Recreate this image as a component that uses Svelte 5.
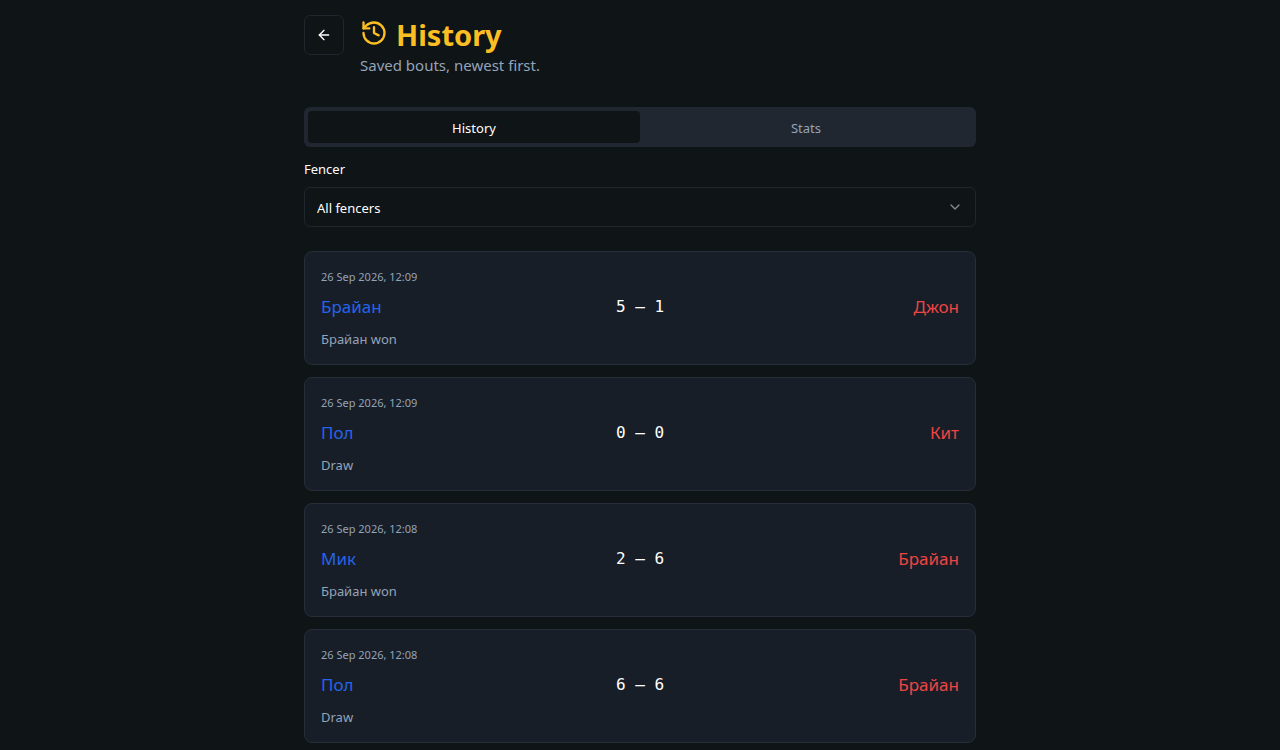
<script lang="ts">
	interface Bout {
		date: string;
		left: string;
		right: string;
		score: [number, number];
	}

	const bouts: Bout[] = [
		{ date: '26 Sep 2026, 12:09', left: 'Брайан', right: 'Джон', score: [5, 1] },
		{ date: '26 Sep 2026, 12:09', left: 'Пол', right: 'Кит', score: [0, 0] },
		{ date: '26 Sep 2026, 12:08', left: 'Мик', right: 'Брайан', score: [2, 6] },
		{ date: '26 Sep 2026, 12:08', left: 'Пол', right: 'Брайан', score: [6, 6] }
	];

	const fencers = [...new Set(bouts.flatMap((b) => [b.left, b.right]))];

	let tab = $state('history');
	let fencer = $state('');

	let visible = $derived(
		fencer ? bouts.filter((b) => b.left === fencer || b.right === fencer) : bouts
	);

	function outcome({ left, right, score: [a, b] }: Bout): string {
		if (a === b) return 'Draw';
		return `${a > b ? left : right} won`;
	}
</script>

<main>
	<header>
		<button class="back" type="button" aria-label="Back">
			<svg width="16" height="16" viewBox="0 0 24 24">
				<path d="m12 19-7-7 7-7" />
				<path d="M19 12H5" />
			</svg>
		</button>
		<div>
			<h1>
				<svg width="28" height="28" viewBox="0 0 24 24">
					<path d="M3 12a9 9 0 1 0 9-9 9.75 9.75 0 0 0-6.74 2.74L3 8" />
					<path d="M3 3v5h5" />
					<path d="M12 7v5l4 2" />
				</svg>
				History
			</h1>
			<p>Saved bouts, newest first.</p>
		</div>
	</header>

	<div class="tabs" role="tablist">
		<button
			type="button"
			role="tab"
			aria-selected={tab === 'history'}
			class:active={tab === 'history'}
			onclick={() => (tab = 'history')}>History</button
		>
		<button
			type="button"
			role="tab"
			aria-selected={tab === 'stats'}
			class:active={tab === 'stats'}
			onclick={() => (tab = 'stats')}>Stats</button
		>
	</div>

	<div class="filter">
		<label for="fencer">Fencer</label>
		<div class="select">
			<select id="fencer" bind:value={fencer}>
				<option value="">All fencers</option>
				{#each fencers as name}
					<option value={name}>{name}</option>
				{/each}
			</select>
			<svg width="16" height="16" viewBox="0 0 24 24">
				<path d="m6 9 6 6 6-6" />
			</svg>
		</div>
	</div>

	<ul>
		{#each visible as bout}
			<li>
				<time>{bout.date}</time>
				<div class="row">
					<span class="left">{bout.left}</span>
					<span class="score">{bout.score[0]} – {bout.score[1]}</span>
					<span class="right">{bout.right}</span>
				</div>
				<p>{outcome(bout)}</p>
			</li>
		{/each}
	</ul>
</main>

<style>
	:global(body) {
		background: #0f1417;
		color: #fff;
		font-family: 'Noto Sans', sans-serif;
		font-size: 15px;
		line-height: 20px;
	}

	main {
		box-sizing: border-box;
		max-width: 672px;
		margin: 0 auto;
		padding: 15px 0 32px;
	}

	svg {
		fill: none;
		stroke: currentColor;
		stroke-width: 2;
		stroke-linecap: round;
		stroke-linejoin: round;
	}

	button,
	select {
		box-sizing: border-box;
		font-family: inherit;
		font-size: 13px;
		line-height: 20px;
		color: inherit;
	}

	h1,
	p,
	ul {
		margin: 0;
		padding: 0;
	}

	header {
		display: flex;
		gap: 16px;
		margin-bottom: 32px;
	}

	.back {
		display: flex;
		align-items: center;
		justify-content: center;
		width: 40px;
		height: 40px;
		padding: 0;
		background: #0f1417;
		border: 1px solid #20262e;
		border-radius: 6px;
	}

	h1 {
		display: flex;
		gap: 8px;
		font-size: 29px;
		line-height: 40px;
		font-weight: 700;
		color: #fbbf24;
	}

	h1 svg {
		margin-top: 4px;
	}

	p {
		color: #94a3b8;
	}

	.tabs {
		display: grid;
		grid-template-columns: 1fr 1fr;
		padding: 4px;
		background: #212730;
		border-radius: 6px;
	}

	.tabs button {
		height: 32px;
		padding: 2px 12px 0;
		border: 0;
		border-radius: 4px;
		background: none;
		color: #94a3b8;
	}

	.tabs .active {
		background: #0f1417;
		color: #fff;
	}

	.filter {
		display: grid;
		gap: 8px;
		margin: 12px 0 24px;
		font-size: 13px;
	}

	.select {
		display: grid;
		align-items: center;
	}

	.select > * {
		grid-area: 1 / 1;
	}

	.select svg {
		justify-self: end;
		margin-right: 13px;
		opacity: 0.5;
		pointer-events: none;
	}

	select {
		appearance: none;
		width: 100%;
		height: 40px;
		padding: 2px 12px 0;
		background: #0f1417;
		border: 1px solid #20262e;
		border-radius: 6px;
	}

	ul {
		display: grid;
		gap: 12px;
		list-style: none;
	}

	li {
		display: grid;
		gap: 8px;
		padding: 17px 16px 15px;
		background: #171e27;
		border: 1px solid #272e39;
		border-radius: 8px;
	}

	time {
		font-size: 11px;
		line-height: 16px;
		color: #94a3b8;
	}

	.row {
		display: grid;
		grid-template-columns: 1fr auto 1fr;
		align-items: center;
		font-size: 17px;
		line-height: 28px;
	}

	.left {
		color: #2563eb;
	}

	.right {
		color: #ef4444;
		text-align: right;
	}

	.score {
		font-family: 'DejaVu Sans Mono', monospace;
		font-size: 16px;
	}

	li p {
		font-size: 13px;
	}
</style>
